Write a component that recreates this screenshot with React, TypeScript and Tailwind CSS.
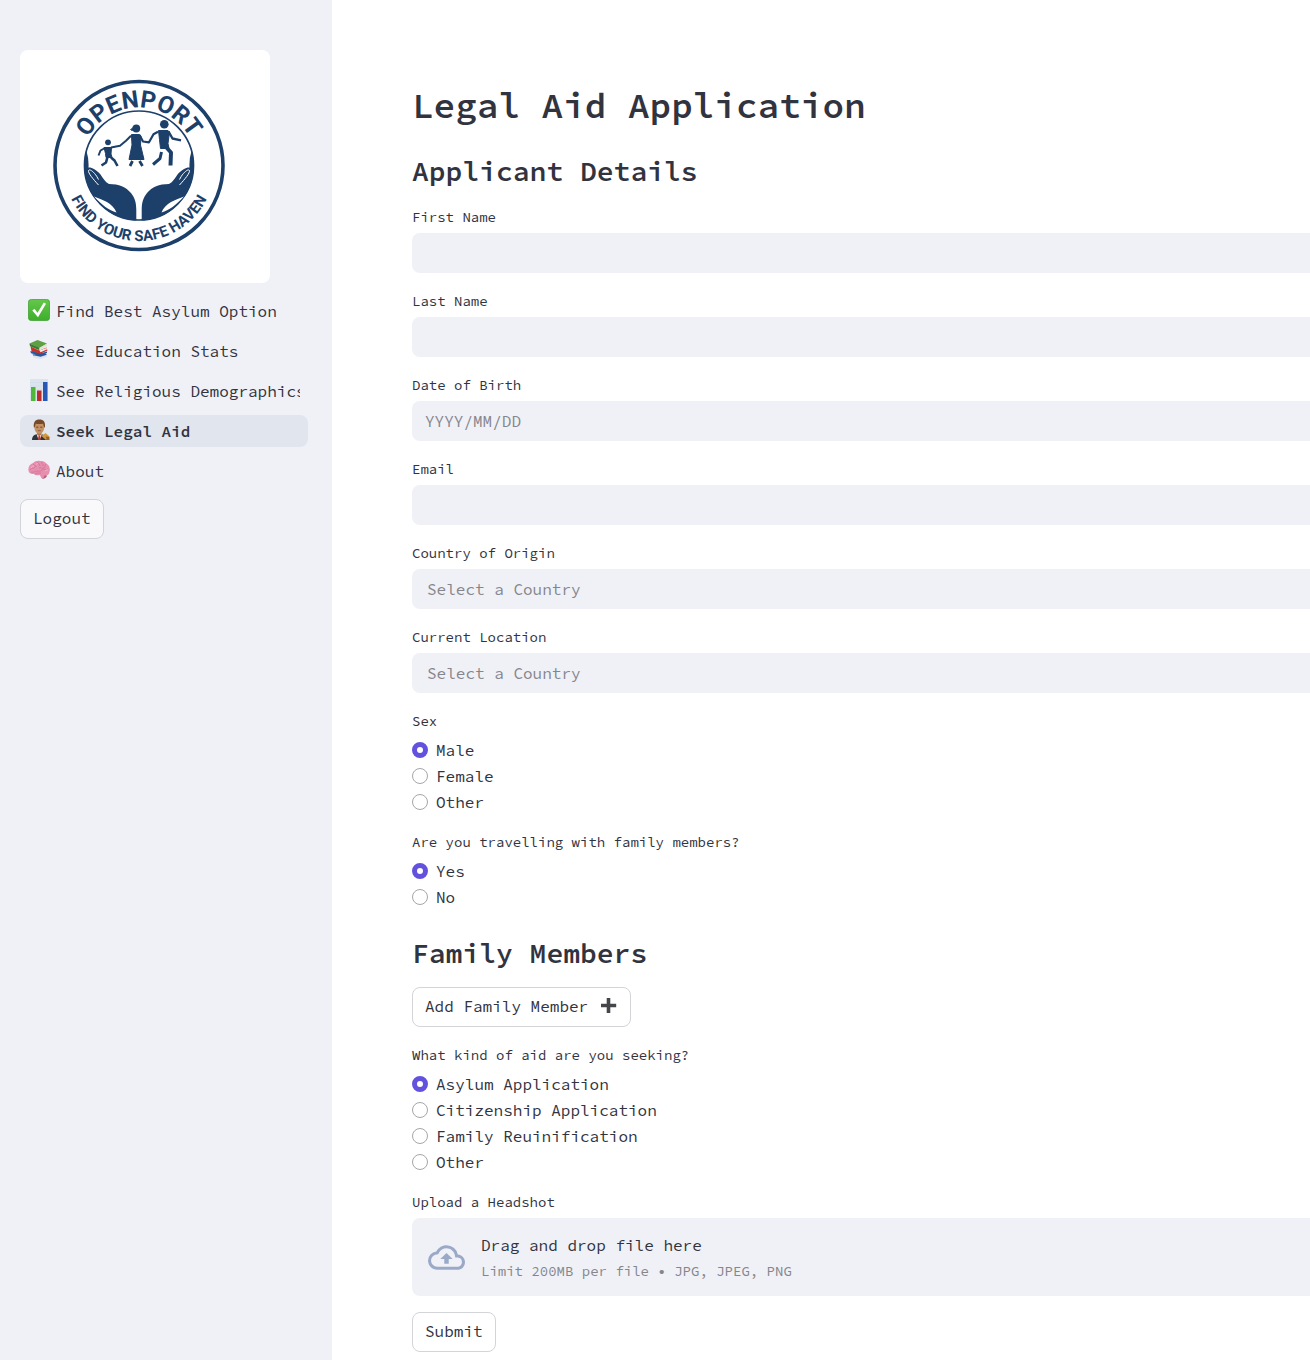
import React from "react";
import { MdOutlineCloudUpload } from "react-icons/md";

const INK = "#1d406b";

function Hand() {
  return (
    <>
      <path
        fill={INK}
        d="M63 95 L66.500 101 Q69 109 68.500 117.500 C71 117 76 119 80.500 124.500 C83 128 85 132 89 134 C99 134 106 137 111 143 C115 148 116.300 153 116.300 160 V172 H96 L63 140Z"
      />
      <path
        d="M78.500 135C73 129 68 123 68.500 120.500C70 118 76 124 78.500 129.500"
        fill="none"
        stroke="#fff"
        strokeWidth="1"
      />
      <path fill="#fff" d="M74 146.500 C82 149.500 93 153 96.500 162.500 C89 160.500 82 155 74 146.500Z" />
    </>
  );
}

function Logo() {
  return (
    <svg viewBox="0 0 250 233" className="block w-full" role="img" aria-label="Openport, find your safe haven">
      <defs>
        <path id="arc-top" d="M61 115.500a58 58 0 0 1 116 0" />
        <path id="arc-bottom" d="M43.500 115.500a75.500 75.500 0 0 0 151 0" />
        <clipPath id="globe">
          <circle cx="119" cy="115.500" r="55" />
        </clipPath>
      </defs>
      <circle cx="119" cy="115.500" r="84" fill="none" stroke={INK} strokeWidth="3.600" />
      <circle cx="119" cy="115.500" r="54.500" fill="none" stroke={INK} strokeWidth="1.700" />
      <text fill={INK} textAnchor="middle" className="font-['Roboto'] text-[24px] font-bold">
        <textPath href="#arc-top" startOffset="50%">OPENPORT</textPath>
      </text>
      <text fill={INK} textAnchor="middle" className="font-['Roboto'] text-[15px] font-bold">
        <textPath href="#arc-bottom" startOffset="50%">FIND YOUR SAFE HAVEN</textPath>
      </text>
      <g clipPath="url(#globe)">
        <Hand />
        <g transform="translate(238 0) scale(-1 1)">
          <Hand />
        </g>
      </g>
      <g fill={INK} stroke={INK} strokeLinejoin="round">
        <circle cx="88" cy="92.300" r="2.900" stroke="none" />
        <path d="M84 97.500h7.500l-.5 6.500 1 3.500h-6l-.5-4z" strokeWidth="1" />
        <path d="M85 98l-4.500 2.500-2 5M91 97.500l9-1.800 6-5 5-5" fill="none" strokeWidth="2" />
        <path d="M87.500 107l-1.500 5.500-4.500 3M91 107.500l3.500 3 3 5.500" fill="none" strokeWidth="2.600" />
        <circle cx="116.300" cy="78.500" r="3.900" stroke="none" />
        <path d="M116 75.500c-3 .5-3.500 3.500-5.500 4l1 1 4-.5z" strokeWidth=".8" />
        <path d="M111.500 84.500h8l1.500 1.500-.5 9 3.500 14.500h-15l3-14.500-.5-9z" strokeWidth="1" />
        <path d="M119.500 85l3.500 6.500 6 .8 4.500-8 4.500-2.500" fill="none" strokeWidth="2.200" />
        <path d="M112.500 111l-2.500 5M119.500 111l3 5" fill="none" strokeWidth="2.800" />
        <circle cx="144.300" cy="74.300" r="4.300" stroke="none" />
        <path d="M138.500 80.500h9.500l1.500 1.500-1.500 11.500 1 5h-8.500l-1-9z" strokeWidth="1" />
        <path d="M148.500 81.500l4 7 8.500 1.800" fill="none" strokeWidth="2.400" />
        <path d="M146 97l5 5.500-.5 13" fill="none" strokeWidth="4" />
        <path d="M141.500 102l-1.500 6.500-7 6" fill="none" strokeWidth="3" />
      </g>
    </svg>
  );
}

const ICON = "mb-0.5 h-[22px] w-[22px] shrink-0";

function CheckIcon() {
  return (
    <svg viewBox="0 0 22 22" className={ICON} aria-hidden="true">
      <defs>
        <linearGradient id="green" x2="0" y2="1">
          <stop stopColor="#63c84b" />
          <stop offset="1" stopColor="#3fae2c" />
        </linearGradient>
      </defs>
      <rect x=".4" y=".4" width="21.200" height="21.200" rx="3" fill="url(#green)" stroke="#3c9e2c" strokeWidth=".8" />
      <path d="M4.300 11.500 6.500 9.800 9.500 13.800 15.800 3.500 18 4.700 10 18.200Z" fill="#fff" />
    </svg>
  );
}

function BooksIcon() {
  return (
    <svg viewBox="0 0 22 22" className={ICON} aria-hidden="true">
      <path d="M4.500 15.500 17 14l2 2-6.500 3-6-1z" fill="#28579e" />
      <path d="M5.500 16.200l7 1.500 6.500-2v2l-6.500 2.300-6.500-1z" fill="#dfe3ea" />
      <path d="M2 12.500 5 12 13 14.200 19 12.500v1.500l-6.500 2.200-9-1.700z" fill="#28579e" />
      <path d="M2.500 7.500 11.500 11.500 18.500 8.500l1 3-7 3.200-9-2.500z" fill="#c8322a" />
      <path d="M11.500 11.500 18.500 9l.8 1.200-6.800 3z" fill="#f1eeee" />
      <path d="M1.500 4.500 9.500 1l9.500 3.500-7.500 4.500z" fill="#5da044" />
      <path d="M1.500 4.500 11.500 8.800v2.400L2 7.200z" fill="#397a2d" />
      <path d="M11.500 8.800 19 4.800v2.200l-7.500 4.200z" fill="#dfe4d6" />
    </svg>
  );
}

function ChartIcon() {
  return (
    <svg viewBox="0 0 22 22" className={ICON} aria-hidden="true">
      <path d="M2 0h18v22H2z" fill="#dce5ee" />
      <path d="M2 3.500h18M2 7h18M2 10.500h18M2 14h18M2 17.500h18" stroke="#cfdae6" strokeWidth=".6" />
      <path d="M3 8h4.500v14H3z" fill="#4fb83a" />
      <path d="M9 11.500h4.500V22H9z" fill="#bf2a2c" />
      <path d="M15 3h4.500v19H15z" fill="#2858b5" />
    </svg>
  );
}

function JudgeIcon() {
  return (
    <svg viewBox="0 0 22 22" className={ICON} aria-hidden="true">
      <path d="M4 21c0-4 2.500-6 7-6s8 2 8 6z" fill="#30343c" />
      <path d="M8.500 14h5.500l-1 4-1.700 3-1.800-3z" fill="#f1f1f3" />
      <path d="M10.600 16.500h1.500l.6 4.500h-2.700z" fill="#c93030" />
      <path d="M9 12h4.500v3.500l-2.300 1.500L9 15.500z" fill="#a87448" />
      <ellipse cx="11.300" cy="8.500" rx="4.900" ry="6.300" fill="#c49262" />
      <path d="M6 9C4.900 3 7.500.5 11.300.5c4.200 0 6.700 2.500 5.500 8.500l-1-1.500-.8-2.700c-2.500.3-5 .3-7.300 0L7 7.500z" fill="#77492b" />
      <path d="M8.300 8.200h2M12.300 8.200h2" stroke="#5a3c26" strokeWidth=".9" />
      <path d="M9.800 11.700h3" stroke="#8a4a38" strokeWidth=".8" />
      <path d="M13.500 17l4-3 4 3.500-3.500 3.500z" fill="#d39a3d" />
      <path d="M17.500 17.500l1.500 3.500h2.500v-3z" fill="#94602f" />
    </svg>
  );
}

function BrainIcon() {
  return (
    <svg viewBox="0 0 22 22" className={ICON} aria-hidden="true">
      <path d="M12 15c3-1 6 0 7 2-1 2-3 3-5 2.500z" fill="#b85c7c" />
      <path
        d="M.5 12C-.2 8 2 5 5 4c2-2 5-2.500 7-2 3-.5 6 1 7 3 2.500 1.500 3.500 5 2.500 8-.5 3-3 4-5 3.500l-1 2.500c-1.500.5-3-1-3.500-3-3 .5-5 .5-6-1C3 15.500 1 14 .5 12z"
        fill="#e78fae"
      />
      <path
        d="M2 11c2-3 4-1 5-3M5 5c1 2 3 1 3 3M9 3c0 2 3 1 3 4M14 3c-1 2 2 2 1 4M18 5c-2 1 0 3-2 4M3 13c3 1 4-1 6-1s3 1 5-1 4 1 6-1M7 15c1-1 4-1 6-1M11 9c2-1 3 1 5 0"
        fill="none"
        stroke="#cd6f92"
        strokeWidth=".7"
      />
      <path d="M3 9c1-2 2-2 3-2M8 5.500c1-1 2-1 2-1M17 12c1-1 2-1 3-1" fill="none" stroke="#f7bccf" strokeWidth=".9" />
    </svg>
  );
}

const NAV = [
  { label: "Find Best Asylum Option", Icon: CheckIcon },
  { label: "See Education Stats", Icon: BooksIcon },
  { label: "See Religious Demographics", Icon: ChartIcon },
  { label: "Seek Legal Aid", Icon: JudgeIcon, active: true },
  { label: "About", Icon: BrainIcon },
];

const LABEL = "flex h-6 items-center text-sm";
const HEADING = "pt-[11px] pb-px text-[28px] leading-[34px] font-semibold";
const FIELD =
  "block h-10 w-full appearance-none rounded-lg bg-[#f0f1f6] text-base outline-none placeholder:text-[#85868d] focus:ring-1 focus:ring-[#6352de]";
const BUTTON = "flex h-10 items-center self-start rounded-lg border border-[#d3d4d8] px-3 pb-0.5";

function TextField({ id, label, placeholder }: { id: string; label: string; placeholder?: string }) {
  return (
    <div className="flex flex-col gap-1">
      <label htmlFor={id} className={LABEL}>{label}</label>
      <input id={id} type="text" placeholder={placeholder} className={`${FIELD} px-[13px]`} />
    </div>
  );
}

function CountryField({ id, label }: { id: string; label: string }) {
  return (
    <div className="flex flex-col gap-1">
      <label htmlFor={id} className={LABEL}>{label}</label>
      <select id={id} defaultValue="" className={`${FIELD} px-[15px] text-[#85868d]`}>
        <option value="">Select a Country</option>
      </select>
    </div>
  );
}

function RadioField({ name, label, options }: { name: string; label: string; options: string[] }) {
  return (
    <fieldset className="-mb-px">
      <legend className={LABEL}>{label}</legend>
      <div className="mt-1 flex flex-col items-start">
        {options.map((option, i) => (
          <label key={option} className="flex h-[26px] items-center gap-2">
            <input
              type="radio"
              name={name}
              value={option}
              defaultChecked={i === 0}
              className="h-4 w-4 appearance-none rounded-full border border-[#a5a6ab] bg-white checked:border-[5px] checked:border-[#6352de]"
            />
            {option}
          </label>
        ))}
      </div>
    </fieldset>
  );
}

export default function App() {
  return (
    <div className="flex min-h-screen overflow-hidden bg-white font-['Source_Code_Pro','Liberation_Mono',monospace] text-base text-[#31333f]">
      <aside className="flex w-[332px] shrink-0 flex-col bg-[#f0f1f6] pt-[50px] pr-6 pl-5">
        <div className="w-[250px] overflow-hidden rounded-lg bg-white">
          <Logo />
        </div>
        <nav className="mt-3 flex flex-col gap-2">
          {NAV.map(({ label, Icon, active }) => (
            <a
              key={label}
              href="#"
              aria-current={active ? "page" : undefined}
              className={`flex h-8 items-center rounded-lg px-2 ${active ? "bg-[#e1e6ee] font-semibold" : ""}`}
            >
              <span className="flex min-w-0 flex-1 items-center gap-[6px] overflow-hidden whitespace-nowrap">
                <Icon />
                <span>{label}</span>
              </span>
            </a>
          ))}
        </nav>
        <button type="button" className={`${BUTTON} mt-3 bg-[#f9f9fc]`}>Logout</button>
      </aside>

      <main className="min-w-0 flex-1 pt-[85px] pb-2 pl-20">
        <form className="-mr-4 flex flex-col gap-4">
          <h1 className="text-4xl leading-[42px] font-semibold">Legal Aid Application</h1>
          <h2 className={HEADING}>Applicant Details</h2>
          <TextField id="first-name" label="First Name" />
          <TextField id="last-name" label="Last Name" />
          <TextField id="birth" label="Date of Birth" placeholder="YYYY/MM/DD" />
          <TextField id="email" label="Email" />
          <CountryField id="origin" label="Country of Origin" />
          <CountryField id="location" label="Current Location" />
          <RadioField name="sex" label="Sex" options={["Male", "Female", "Other"]} />
          <RadioField name="family" label="Are you travelling with family members?" options={["Yes", "No"]} />
          <h2 className={HEADING}>Family Members</h2>
          <button type="button" className={`${BUTTON} gap-3 bg-white`}>
            Add Family Member
            <svg viewBox="0 0 18 18" className="h-[18px] w-[18px]" aria-hidden="true">
              <path d="M6.700 1h3.600v5.800H16.200v3.500h-5.900V16H6.700v-5.700H1V6.800h5.700z" fill="#45464a" />
            </svg>
          </button>
          <RadioField
            name="aid"
            label="What kind of aid are you seeking?"
            options={["Asylum Application", "Citizenship Application", "Family Reuinification", "Other"]}
          />
          <div className="flex flex-col gap-1">
            <label htmlFor="headshot" className={LABEL}>Upload a Headshot</label>
            <label htmlFor="headshot" className="flex h-[78px] cursor-pointer items-center rounded-lg bg-[#f0f1f6] px-4">
              <MdOutlineCloudUpload className="h-[37px] w-[37px] text-[#9ba9c9]" aria-hidden="true" />
              <span className="ml-4 flex flex-col pt-0.5">
                <span className="leading-[26px]">Drag and drop file here</span>
                <span className="text-sm leading-[26px] text-[#85868d]">Limit 200MB per file • JPG, JPEG, PNG</span>
              </span>
              <input id="headshot" type="file" accept=".jpg,.jpeg,.png" className="sr-only" />
            </label>
          </div>
          <button type="submit" className={`${BUTTON} bg-white`}>Submit</button>
        </form>
      </main>
    </div>
  );
}
